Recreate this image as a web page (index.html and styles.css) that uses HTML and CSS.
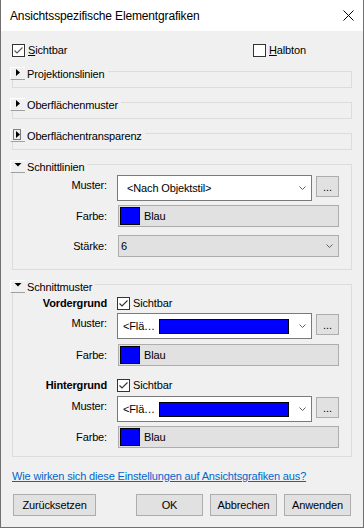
FILE: index.html
```html
<!DOCTYPE html>
<html lang="de">

<head>
  <meta charset="UTF-8">
  <meta name="viewport" content="width=device-width, initial-scale=1.0">
  <title>Ansichtsspezifische Elementgrafiken</title>
  <link rel="stylesheet" href="styles.css">
</head>

<body>

  <div class="window">
    <div class="titlebar">
      <span class="title">Ansichtsspezifische Elementgrafiken</span>
      <svg class="close" width="11" height="11" viewBox="0 0 11 11">
        <path d="M0.5 0.5 L10.5 10.5 M10.5 0.5 L0.5 10.5" stroke="#000" stroke-width="1" fill="none" />
      </svg>
    </div>

    <div class="content">
      <div class="toprow">
        <label class="chk chk-wide">
          <svg class="box" width="13" height="13" viewBox="0 0 13 13">
            <rect x="0.5" y="0.5" width="12" height="12" fill="#fff" stroke="#333" />
            <path d="M2.5 6.5 L5 9 L10.5 3.5" fill="none" stroke="#555" stroke-width="1.1" />
          </svg>
          <span><span class="u">S</span>ichtbar</span>
        </label>
        <label class="chk">
          <svg class="box" width="13" height="13" viewBox="0 0 13 13">
            <rect x="0.5" y="0.5" width="12" height="12" fill="#fff" stroke="#333" />
          </svg>
          <span><span class="u">H</span>albton</span>
        </label>
      </div>

      <div class="group first">
        <div class="group-head">
          <span class="expander">
            <svg width="15" height="13" viewBox="0 0 15 13"><path d="M6 2 L10 5.5 L6 9 Z" fill="#000" /></svg>
          </span>
          <span>Projektionslinien</span>
        </div>
      </div>

      <div class="group">
        <div class="group-head">
          <span class="expander">
            <svg width="15" height="13" viewBox="0 0 15 13"><path d="M6 2 L10 5.5 L6 9 Z" fill="#000" /></svg>
          </span>
          <span>Oberflächenmuster</span>
        </div>
      </div>

      <div class="group">
        <div class="group-head">
          <span class="expander">
            <svg width="15" height="13" viewBox="0 0 15 13">
              <rect x="3.5" y="0.5" width="7" height="10" fill="none" stroke="#000" stroke-dasharray="1 1" />
              <path d="M6 2 L10 5.5 L6 9 Z" fill="#000" />
            </svg>
          </span>
          <span>Oberflächentransparenz</span>
        </div>
      </div>

      <div class="group lines">
        <div class="group-head">
          <span class="expander">
            <svg width="15" height="13" viewBox="0 0 15 13"><path d="M4.5 3 L11.5 3 L8 6.5 Z" fill="#000" /></svg>
          </span>
          <span>Schnittlinien</span>
        </div>

        <div class="row row-combo">
          <span class="label">Muster:</span>
          <div class="combo">
            <span class="combo-text">&lt;Nach Objektstil&gt;</span>
            <svg class="chevron" width="7" height="4" viewBox="0 0 7 4"><path d="M0.5 0.5 L3.5 3.5 L6.5 0.5" fill="none" stroke="#606060" /></svg>
          </div>
          <button class="more">...</button>
        </div>

        <div class="row row-farbe">
          <span class="label">Farbe:</span>
          <div class="field">
            <span class="swatch"></span>
            <span>Blau</span>
          </div>
        </div>

        <div class="row row-staerke">
          <span class="label">Stärke:</span>
          <div class="field select">
            <span>6</span>
            <svg class="chevron" width="7" height="4" viewBox="0 0 7 4"><path d="M0.5 0.5 L3.5 3.5 L6.5 0.5" fill="none" stroke="#606060" /></svg>
          </div>
        </div>
      </div>

      <div class="group pattern">
        <div class="group-head">
          <span class="expander">
            <svg width="15" height="13" viewBox="0 0 15 13"><path d="M4.5 3 L11.5 3 L8 6.5 Z" fill="#000" /></svg>
          </span>
          <span>Schnittmuster</span>
        </div>

        <div class="row row-check">
          <span class="label bold">Vordergrund</span>
          <label class="chk">
            <svg class="box" width="13" height="13" viewBox="0 0 13 13">
              <rect x="0.5" y="0.5" width="12" height="12" fill="#fff" stroke="#333" />
              <path d="M2.5 6.5 L5 9 L10.5 3.5" fill="none" stroke="#333" stroke-width="1.1" />
            </svg>
            <span>Sichtbar</span>
          </label>
        </div>

        <div class="row row-combo">
          <span class="label">Muster:</span>
          <div class="combo combo-fill">
            <span class="combo-short">&lt;Flä…</span>
            <span class="bar"></span>
            <svg class="chevron" width="7" height="4" viewBox="0 0 7 4"><path d="M0.5 0.5 L3.5 3.5 L6.5 0.5" fill="none" stroke="#606060" /></svg>
          </div>
          <button class="more">...</button>
        </div>

        <div class="row row-farbe row-farbe-fg">
          <span class="label">Farbe:</span>
          <div class="field">
            <span class="swatch"></span>
            <span>Blau</span>
          </div>
        </div>

        <div class="row row-check row-check-bg">
          <span class="label bold">Hintergrund</span>
          <label class="chk">
            <svg class="box" width="13" height="13" viewBox="0 0 13 13">
              <rect x="0.5" y="0.5" width="12" height="12" fill="#fff" stroke="#333" />
              <path d="M2.5 6.5 L5 9 L10.5 3.5" fill="none" stroke="#333" stroke-width="1.1" />
            </svg>
            <span>Sichtbar</span>
          </label>
        </div>

        <div class="row row-combo row-combo-bg">
          <span class="label">Muster:</span>
          <div class="combo combo-fill">
            <span class="combo-short">&lt;Flä…</span>
            <span class="bar"></span>
            <svg class="chevron" width="7" height="4" viewBox="0 0 7 4"><path d="M0.5 0.5 L3.5 3.5 L6.5 0.5" fill="none" stroke="#606060" /></svg>
          </div>
          <button class="more">...</button>
        </div>

        <div class="row row-farbe">
          <span class="label">Farbe:</span>
          <div class="field">
            <span class="swatch"></span>
            <span>Blau</span>
          </div>
        </div>
      </div>

      <a class="link" href="#">Wie wirken sich diese Einstellungen auf Ansichtsgrafiken aus?</a>

      <div class="buttons">
        <button class="btn btn-reset">Zurücksetzen</button>
        <button class="btn">OK</button>
        <button class="btn">Abbrechen</button>
        <button class="btn">Anwenden</button>
      </div>
    </div>
  </div>

</body>

</html>
```

FILE: styles.css
```css
* {
  box-sizing: border-box;
}

body {
  margin: 0;
  font-family: "Liberation Sans", Arial, sans-serif;
  font-size: 11px;
  letter-spacing: -0.15px;
  color: #000;
  background: #fff;
}

.window {
  width: 364px;
  height: 528px;
  border: 1px solid #707070;
  border-top: 0;
  background: #f0f0f0;
  display: flex;
  flex-direction: column;
}

.titlebar {
  height: 31px;
  flex-shrink: 0;
  background: #fff;
  display: flex;
  align-items: center;
  justify-content: space-between;
  padding: 0 9px;
  font-size: 12px;
}

.content {
  flex: 1;
  padding: 0 11px;
}

/* checkboxes */

.toprow {
  display: flex;
  align-items: center;
  height: 16px;
  margin-top: 11px;
}

.chk {
  display: flex;
  align-items: center;
  gap: 3px;
}

.chk-wide {
  width: 241px;
}

.box {
  display: block;
  flex-shrink: 0;
}

.u {
  text-decoration: underline;
}

/* groups */

.group {
  border: 1px solid #dcdcdc;
  margin-top: 14px;
  padding: 0 12px 7px 0;
}

.group.first {
  margin-top: 13px;
}

.group.lines {
  padding-bottom: 12px;
}

.group.pattern {
  padding-bottom: 8px;
}

.group-head {
  display: flex;
  align-items: center;
  gap: 2px;
  width: max-content;
  height: 13px;
  margin: -5px 0 0 -3px;
  padding-right: 3px;
  background: #f0f0f0;
}

.expander {
  display: block;
  width: 15px;
  height: 13px;
  border-top: 1px solid #fff;
  border-left: 1px solid #fff;
  border-bottom: 1px solid #a0a0a0;
}

.expander svg {
  display: block;
  margin: -1px 0 0 -1px;
}

/* field rows */

.row {
  display: flex;
  align-items: center;
}

.label {
  width: 94px;
  margin-right: 10px;
  text-align: right;
}

.bold {
  font-weight: bold;
}

.row-combo {
  margin-top: 2px;
  align-items: flex-start;
}

.row-combo .label {
  line-height: 21px;
}

.row-combo-bg {
  margin-top: 3px;
}

.row-farbe {
  margin-top: 4px;
}

.row-farbe-fg {
  margin-top: 5px;
}

.row-staerke {
  margin-top: 8px;
}

.row-check {
  height: 16px;
  margin-top: 2px;
}

.row-check-bg {
  margin-top: 11px;
}

.combo {
  width: 195px;
  height: 26px;
  background: #fff;
  border: 1px solid #7a7a7a;
  display: flex;
  align-items: center;
  padding: 0 5px 0 9px;
}

.combo-fill {
  padding-left: 5px;
}

.combo-short {
  width: 36px;
  flex-shrink: 0;
}

.bar {
  width: 130px;
  height: 15px;
  background: #0000ff;
  border: 1px solid #000;
}

.chevron {
  display: block;
  margin-left: auto;
}

.more {
  width: 23px;
  height: 21px;
  margin: 1px 0 0 4px;
  padding: 0;
  background: #e1e1e1;
  border: 1px solid #adadad;
  font-family: inherit;
  font-size: 11px;
  line-height: 14px;
  color: #000;
}

.field {
  width: 221px;
  height: 22px;
  margin-left: 1px;
  background: #e1e1e1;
  border: 1px solid #adadad;
  display: flex;
  align-items: center;
  gap: 4px;
  padding: 0 5px 0 1px;
}

.field.select {
  padding-left: 2px;
}

.swatch {
  width: 20px;
  height: 18px;
  background: #0000ff;
  border: 1px solid #000;
}

/* footer */

.link {
  display: block;
  width: max-content;
  margin-top: 11px;
  line-height: 16px;
  color: #0066cc;
  text-decoration: underline;
}

.buttons {
  display: flex;
  gap: 7px;
  margin-top: 10px;
  padding: 0 1px;
}

.btn {
  width: 67px;
  height: 22px;
  padding: 0;
  background: #e1e1e1;
  border: 1px solid #adadad;
  font-family: inherit;
  font-size: 11px;
  letter-spacing: inherit;
  color: #000;
}

.btn-reset {
  width: 83px;
  margin-right: auto;
}
```
